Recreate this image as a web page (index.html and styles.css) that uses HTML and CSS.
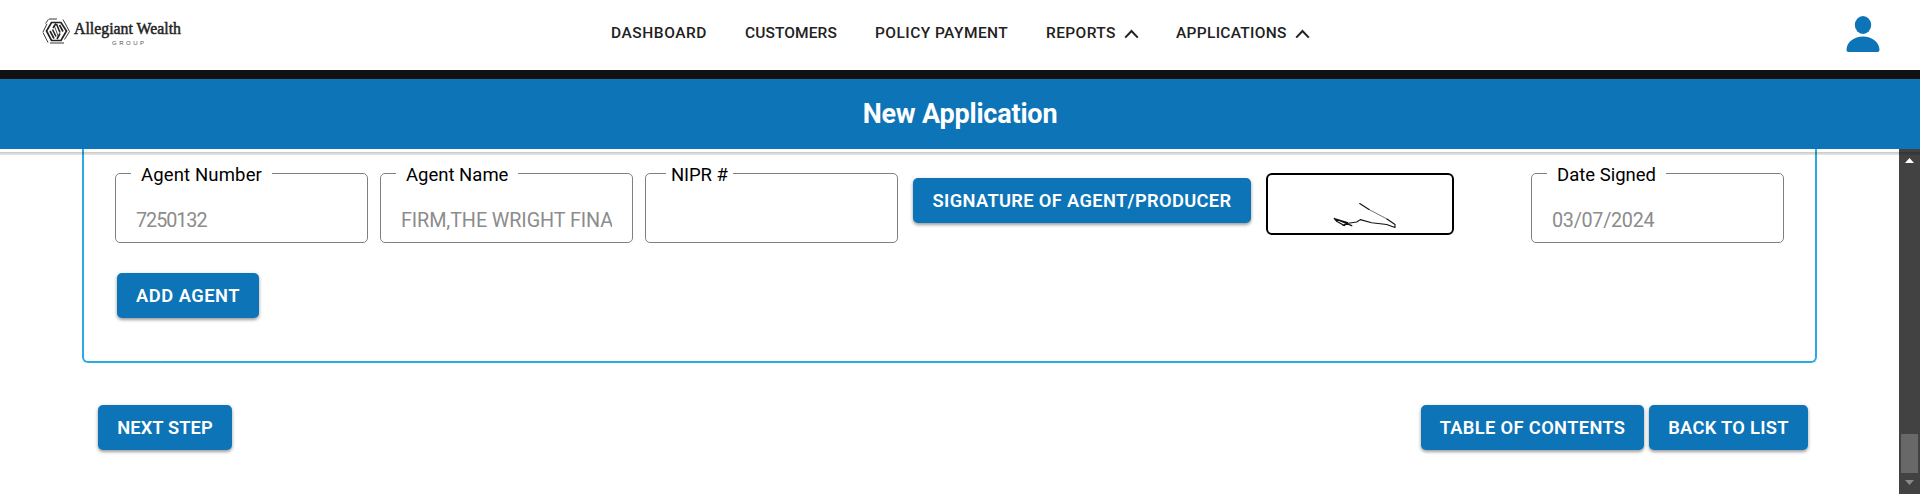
FILE: index.html
```
<!DOCTYPE html>
<html lang="en">
<head>
<meta charset="utf-8">
<title>New Application</title>
<link rel="stylesheet" href="styles.css">
</head>
<body>
<header class="topbar">
  <svg class="logo" width="142" height="30" viewBox="0 0 142 30">
    <g fill="none" stroke="#222">
      <path d="M9.500 5.500H19L24.500 14 19 23.500H9.500L4.500 14Z" stroke-width="1.700"/>
      <path d="M7 2H15M3.500 6.500 6.500 2.300M1 15 5 6.800M1 15.500 6 25.500M8 26H22M21 2.500 27.500 14.500 22.500 22.500" stroke-width=".9"/>
      <path d="M8 14 12 21.500M10.500 12.500 14 19.500M14.500 7 18 15.500M17.500 8 21 14.500M11 11 14 6.500M15 22 18 16.500" stroke-width="1.600"/>
      <path d="M12 8 16.500 20" stroke-width=".8"/>
    </g>
    <text class="logo-name" x="32" y="17" textLength="107" lengthAdjust="spacingAndGlyphs">Allegiant Wealth</text>
    <text class="logo-sub" x="70" y="28" textLength="32">GROUP</text>
  </svg>
  <nav class="nav">
    <a class="dashboard">DASHBOARD</a>
    <a class="customers">CUSTOMERS</a>
    <a class="policy">POLICY PAYMENT</a>
    <a class="reports">REPORTS</a>
    <svg class="chevron" width="15" height="10" viewBox="0 0 15 10"><path d="M1.200 8.600 7.500 2 13.800 8.600"/></svg>
    <a class="applications">APPLICATIONS</a>
    <svg class="chevron" width="15" height="10" viewBox="0 0 15 10"><path d="M1.200 8.600 7.500 2 13.800 8.600"/></svg>
  </nav>
  <svg class="user" width="34" height="36" viewBox="0 0 34 36"><ellipse cx="17" cy="9" rx="8.200" ry="9"/><path d="M2.500 36Q.3 36 .5 33.500C1 26 8 20.500 17 20.500S33 26 33.500 33.500Q33.700 36 31.500 36Z"/></svg>
</header>
<div class="banner"><h1>New Application</h1></div>
<div class="viewport">
  <main class="content">
    <section class="card">
      <div class="agent-row">
        <fieldset class="field"><legend class="wide l-number">Agent Number</legend><div class="value v-number">7250132</div></fieldset>
        <fieldset class="field"><legend class="wide">Agent Name</legend><div class="value v-name">FIRM,THE WRIGHT FINAN</div></fieldset>
        <fieldset class="field nipr"><legend>NIPR #</legend></fieldset>
        <button class="btn sign">SIGNATURE OF AGENT/PRODUCER</button>
        <div class="signature">
          <svg width="184" height="58" viewBox="0 0 184 58" fill="none" stroke="#111" stroke-linejoin="round" stroke-linecap="round">
            <path d="M91.700 28.500 101 34.500" stroke-width="1.100"/>
            <path d="M101 34.500 119 44" stroke-width=".6"/>
            <path d="M119 44 127 49.500V52.500L118.700 49.500 103.700 47.700 92.300 44.600 88.700 47 78.700 48.500 75 50.500" stroke-width="1.100"/>
            <path d="M83.700 50.700 66.300 43.500 69 46.500 76.300 50.500 79.500 47.500 66.300 43.500" stroke-width="1.300"/>
          </svg>
        </div>
        <fieldset class="field date"><legend class="wide">Date Signed</legend><div class="value v-date">03/07/2024</div></fieldset>
      </div>
      <button class="btn add">ADD AGENT</button>
    </section>
    <div class="actions">
      <button class="btn next">NEXT STEP</button>
      <button class="btn toc">TABLE OF CONTENTS</button>
      <button class="btn back">BACK TO LIST</button>
    </div>
  </main>
  <aside class="scrollbar">
    <svg width="9" height="5" viewBox="0 0 9 5"><path d="M0 5 4.500 0 9 5Z" fill="#fff"/></svg>
    <div class="thumb"></div>
    <svg width="9" height="5" viewBox="0 0 9 5"><path d="M0 0H9L4.500 5Z" fill="#8a8a8a"/></svg>
  </aside>
</div>
</body>
</html>
```
FILE: styles.css
```
* { box-sizing: border-box; }
body { margin: 0; height: 494px; overflow: hidden; background: #fff; font-family: Roboto, "Liberation Sans", sans-serif; }
.topbar { display: flex; align-items: flex-start; height: 79px; border-bottom: 9px solid #111; }
.logo { margin: 17px 0 0 42px; flex: none; }
.logo-name { font: 400 17px "Liberation Serif", serif; fill: #222; stroke: #222; stroke-width: .5px; }
.logo-sub { font: 6px "Liberation Sans", sans-serif; fill: #555; }
.nav { display: flex; align-items: center; height: 66px; margin-left: 427px; color: #212121; font-size: 15.500px; font-weight: 500; white-space: nowrap; }
.nav a { flex: none; }
.dashboard { width: 134px; letter-spacing: .55px; }
.customers { width: 130px; letter-spacing: .1px; }
.policy { width: 171px; letter-spacing: .45px; }
.reports { width: 78px; letter-spacing: .4px; }
.applications { width: 119px; margin-left: 37px; letter-spacing: .3px; }
.chevron { flex: none; fill: none; stroke: #222; stroke-width: 2px; margin-top: 1px; }
.user { margin: 16px 40px 0 auto; fill: #0d74b8; }
.banner { height: 70px; background: #0d74b8; display: flex; align-items: center; justify-content: center; }
.banner h1 { margin: 0; color: #fff; font-size: 27px; font-weight: 700; line-height: 32px; letter-spacing: -.2px; }
.viewport { display: flex; height: 345px; position: relative; }
.viewport::before { content: ""; position: absolute; top: 3px; left: 0; right: 0; height: 3px; background: linear-gradient(rgba(0,0,0,.22), rgba(0,0,0,.09)); z-index: 1; }
.content { flex: 1; padding: 0 82px; }
.card { height: 214px; border: 2px solid #29abe2; border-top: 0; border-radius: 0 0 6px 6px; padding: 12px 31px 0; }
.agent-row { display: flex; align-items: flex-start; height: 112px; }
.field { flex: none; width: 253px; height: 82px; margin: 0 12px 0 0; padding: 0 20px; min-width: 0; border: 1px solid #808080; border-radius: 5px; }
.field legend { height: 24px; line-height: 28px; font-size: 18.500px; color: #000; padding: 0 5px; white-space: nowrap; }
.field legend.wide { margin-left: -5px; padding: 0 10px; }
.field .l-number { letter-spacing: .15px; }
.nipr legend { letter-spacing: -.1px; }
.value { overflow: hidden; margin-top: 24px; height: 24px; line-height: 24px; font-size: 19.800px; color: #8c8c8c; white-space: nowrap; }
.v-number { letter-spacing: -1.050px; }
.v-name { width: 211px; letter-spacing: -.1px; }
.v-date { letter-spacing: -.3px; }
.btn { flex: none; height: 45px; padding: 0; border: 0; border-radius: 5px; background: #0d74b8; color: #fff; font: 600 18.300px/45px Roboto, sans-serif; white-space: nowrap; box-shadow: 0 2px 3px rgba(0,0,0,.3), 0 1px 5px rgba(0,0,0,.14); }
.sign { width: 338px; margin: 17px 15px 0 3px; letter-spacing: .35px; }
.signature { flex: none; width: 188px; height: 62px; margin: 12px 0 0; border: 2px solid #000; border-radius: 6px; }
.signature svg { display: block; }
.date { margin: 0 0 0 auto; }
.add { width: 142px; margin-left: 2px; letter-spacing: .5px; }
.actions { display: flex; padding: 42px 9px 0 16px; }
.next { width: 134px; letter-spacing: .1px; }
.toc { width: 223px; margin-left: auto; letter-spacing: .35px; }
.back { width: 159px; margin-left: 5px; letter-spacing: .3px; }
.scrollbar { width: 21px; background: #424242; display: flex; flex-direction: column; align-items: center; padding: 9px 0; }
.thumb { width: 17px; height: 39px; margin: auto 0 7px; background: #686868; }
```
